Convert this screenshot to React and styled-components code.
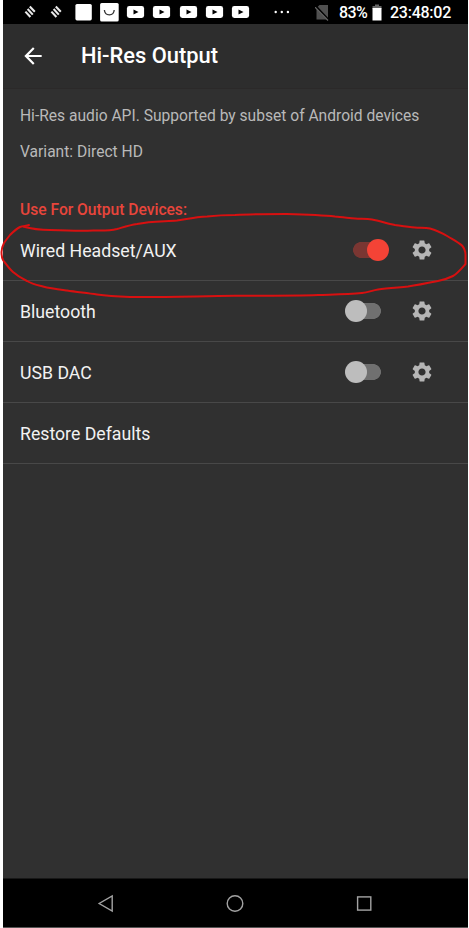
import React, { useState } from 'react';
import styled, { createGlobalStyle } from 'styled-components';
import { MdArrowBack, MdSettings } from 'react-icons/md';


// styling
const GlobalStyle = createGlobalStyle`
    html, body {
      margin: 0;
      background: #fff;
    }
    * {
      box-sizing: border-box;
    }
  `

const ScreenStyle = styled.div`
    position: relative;
    display: flex;
    flex-direction: column;
    width: 469px;
    height: 928px;
    padding: 0 1px 0 3px;
    background: #fff;
    font-family: Roboto, "Liberation Sans", sans-serif;
    overflow: hidden;
  `
const StatusBarStyle = styled.div`
    display: flex;
    align-items: center;
    height: 24px;
    padding: 0 17px 1px 21px;
    background: #000;
    color: #fff;
    flex-shrink: 0;
  `
const NotificationsStyle = styled.div`
    display: flex;
    align-items: center;
    svg {
      display: block;
      width: 26.3px;
      height: 22px;
      overflow: visible;
    }
  `
const StatusInfoStyle = styled.div`
    display: flex;
    align-items: center;
    margin-left: auto;
    svg {
      display: block;
    }
  `
const StatusTextStyle = styled.span`
    width: ${props => props.$width}px;
    font-size: 16px;
    line-height: 22px;
    font-weight: 500;
    letter-spacing: ${props => props.$spacing || 0}px;
    padding-top: 2px;
    white-space: nowrap;
  `
const HeaderStyle = styled.header`
    display: flex;
    align-items: center;
    height: 65px;
    padding: 0 17px;
    background: #2d2d2d;
    border-bottom: 1px solid #2b2929;
    color: #fff;
    flex-shrink: 0;
  `
const BackStyle = styled.button`
    display: flex;
    padding: 0 0 1px;
    border: none;
    background: none;
    color: #fff;
    font-size: 26px;
  `
const TitleStyle = styled.h1`
    margin: 0 0 0 35px;
    font-size: 21.9px;
    line-height: 28px;
    font-weight: 500;
  `
const ContentStyle = styled.main`
    flex: 1;
    background: #303030;
  `
const DescriptionStyle = styled.div`
    padding: 15px 17px 0;
  `
const ParagraphStyle = styled.p`
    margin: 0 0 12px;
    font-size: 15.6px;
    line-height: 24px;
    color: #b9b9b9;
    white-space: nowrap;
  `
const SectionStyle = styled.h2`
    margin: 34px 17px 0;
    font-size: 15.6px;
    line-height: 24px;
    font-weight: 500;
    color: #e8453b;
  `
const DeviceListStyle = styled.div`
    margin-top: -2px;
  `
const RowStyle = styled.div`
    display: flex;
    align-items: center;
    height: 61px;
    padding: 0 34.5px 1px 17px;
    border-bottom: 1px solid #484848;
    color: #f2f2f2;
    font-size: 17.7px;
  `
const RowLabelStyle = styled.span`
    flex: 1;
    padding-top: 2px;
  `
const SwitchStyle = styled.button`
    display: flex;
    align-items: center;
    justify-content: ${props => props.$on ? 'flex-end' : 'flex-start'};
    width: 44px;
    height: 22px;
    margin-right: 20.5px;
    padding: 0;
    border: none;
    background:
      linear-gradient(${props => props.$on ? '#7a3632, #7a3632' : '#707070, #707070'})
      center / 14px 16px no-repeat,
      radial-gradient(circle at 50% 50%, ${props => props.$on ? '#7a3632' : '#707070'} 7.6px, transparent 8.2px)
      8px 50% / 16px 16px no-repeat,
      radial-gradient(circle at 50% 50%, ${props => props.$on ? '#7a3632' : '#707070'} 7.6px, transparent 8.2px)
      20px 50% / 16px 16px no-repeat;
  `
const ThumbStyle = styled.span`
    width: 22px;
    height: 22px;
    border-radius: 50%;
    background: ${props => props.$on ? '#f44336' : '#bdbdbd'};
  `
const GearStyle = styled.button`
    display: flex;
    padding: 0;
    border: none;
    background: none;
    color: #b5b5b5;
    font-size: 24px;
  `
const NavBarStyle = styled.nav`
    display: flex;
    align-items: center;
    justify-content: center;
    gap: 105px;
    height: 50px;
    padding: 0 2px 0 0;
    border-top: 1px solid #181818;
    border-bottom: 1px solid #555;
    background: #000;
    flex-shrink: 0;
    svg {
      display: block;
      fill: none;
      stroke: #a3a3a3;
      stroke-width: 1.4;
    }
  `
const MarkerStyle = styled.svg`
    position: absolute;
    left: 0;
    top: 0;
    pointer-events: none;
    fill: none;
    stroke: #d81010;
    stroke-width: 2;
    stroke-linecap: round;
    stroke-linejoin: round;
  `
  // styling


function StripesIcon() {
    return (
    <svg viewBox="0 0 26.3 22">
      <path d="M5.8 5.6 L10.8 10.8 M3.6 8 L8.8 13.6 M1.4 10.6 L6.4 16" stroke="#e8e8e8" strokeWidth="2.1" fill="none"/>
    </svg>
    )
}

function VideoIcon() {
    return (
    <svg viewBox="0 0 26.3 22">
      <rect x="-2.1" y="5" width="17.2" height="12" rx="2.4" fill="#fff"/>
      <path d="M4.5 8.6 L9.5 11.1 L4.5 13.6 Z" fill="#000"/>
    </svg>
    )
}

function StatusBar() {
    return (
    <StatusBarStyle>
      <NotificationsStyle>
        <StripesIcon/>
        <StripesIcon/>
        <svg viewBox="0 0 26.3 22">
          <rect x="-1.6" y="3" width="16.4" height="16.4" rx="1.6" fill="#fff"/>
        </svg>
        <svg viewBox="0 0 26.3 22">
          <rect x="-2.9" y="2" width="18.6" height="18.6" rx="1.6" fill="#fff"/>
          <path d="M1.4 9 C1.8 15.4 10.8 15.4 11.2 9" fill="none" stroke="#333" strokeWidth="1.3"/>
        </svg>
        <VideoIcon/>
        <VideoIcon/>
        <VideoIcon/>
        <VideoIcon/>
        <VideoIcon/>
        <svg viewBox="0 0 26.3 22" fill="#fff">
          <circle cx="14.7" cy="11" r="1.2"/>
          <circle cx="20.8" cy="11" r="1.2"/>
          <circle cx="26.9" cy="11" r="1.2"/>
        </svg>
      </NotificationsStyle>
      <StatusInfoStyle>
        <svg width="24" height="22" viewBox="0 0 24 22">
          <path d="M4.5 4 H13 V18.5 H1.5 V7 Z" fill="#505050"/>
          <path d="M0 4.5 L14 19.5" stroke="#000" strokeWidth="2.4"/>
          <path d="M-0.5 5.5 L13 19.5" stroke="#666" strokeWidth="1.2"/>
        </svg>
        <StatusTextStyle $width={33} $spacing={-0.6}>83%</StatusTextStyle>
        <svg width="18" height="22" viewBox="0 0 18 22">
          <path d="M3 3.5 H7 V5 H9.5 V8 H0.5 V5 H3 Z" fill="#666"/>
          <rect x="0.5" y="7" width="9" height="12.5" fill="#fff"/>
        </svg>
        <StatusTextStyle $width={61} $spacing={-0.25}>23:48:02</StatusTextStyle>
      </StatusInfoStyle>
    </StatusBarStyle>
    )
}

function DeviceRow({ label, defaultOn }) {
    const [on, setOn] = useState(Boolean(defaultOn));

    return (
    <RowStyle>
      <RowLabelStyle>{label}</RowLabelStyle>
      <SwitchStyle role="switch" aria-checked={on} aria-label={label} $on={on} onClick={() => setOn(!on)}>
        <ThumbStyle $on={on}/>
      </SwitchStyle>
      <GearStyle aria-label={label + ' settings'}><MdSettings/></GearStyle>
    </RowStyle>
    )
}

function App() {
    return (
    <ScreenStyle>
      <GlobalStyle/>
      <StatusBar/>
      <HeaderStyle>
        <BackStyle aria-label="Back"><MdArrowBack/></BackStyle>
        <TitleStyle>Hi-Res Output</TitleStyle>
      </HeaderStyle>
      <ContentStyle>
        <DescriptionStyle>
          <ParagraphStyle>Hi-Res audio API. Supported by subset of Android devices</ParagraphStyle>
          <ParagraphStyle>Variant: Direct HD</ParagraphStyle>
        </DescriptionStyle>
        <SectionStyle>Use For Output Devices:</SectionStyle>
        <DeviceListStyle>
          <DeviceRow label="Wired Headset/AUX" defaultOn/>
          <DeviceRow label="Bluetooth"/>
          <DeviceRow label="USB DAC"/>
          <RowStyle>
            <RowLabelStyle>Restore Defaults</RowLabelStyle>
          </RowStyle>
        </DeviceListStyle>
      </ContentStyle>
      <NavBarStyle>
        <svg width="24" height="24" viewBox="0 0 24 24"><path d="M18.2 5 V20 L5.2 12.5 Z"/></svg>
        <svg width="24" height="24" viewBox="0 0 24 24"><circle cx="12" cy="12.5" r="7.8"/></svg>
        <svg width="24" height="24" viewBox="0 0 24 24"><rect x="5.6" y="5.9" width="13.2" height="13.2"/></svg>
      </NavBarStyle>
      {/* hand drawn loop around the first device */}
      <MarkerStyle width="469" height="928" viewBox="0 0 469 928">
        <path d="M23 226.5 C32 229 40 230 50 230 C64 230.5 80 231 93 230.5 C102 230.5 109 231 117 229 C124 227 130 225 137 224 C150 221 164 221.5 177 220.5 C187 219 196 217 207 216.5 C216 215.5 225 215 235 215 C252 214 268 214 285 214 C302 214.5 320 215 335 216.5 C342 217 349 218 355 218.5 C361 219 366 218.5 372 219.5 C380 221 387 223.5 395 225 C402 226 408 227 415 227.5 C420 228 425 227.5 430 228.5 C436 230 442 233 448 236.5 C453 239.5 458 242 462 245.5 C465 249 465.5 251 465.5 255 V264 C462 268 457 274 453 276 C448 278.5 443 280 438 281 C428 283 418 285 408 286.5 C398 287.5 387 288 378 289.5 C372 290.5 368 292.5 362 293 C347 294.5 332 294.5 318 295 C290 296 262 295.5 235 295.7 C200 296 164 297.5 130 297 C118 296.5 108 296 97 294.5 C87 293 77 292 67 290.5 C59 289.5 50 288.5 43 286.5 C37 285 32 284 27 281 C22 278.5 17 275.5 13 272 C9 268.5 6 264 3 260 C1.5 257 1.5 255 1.5 252 C1.5 249 2.5 246 4 243 C6 240 8 237.5 10 235 C13 232 16 229 20 227 C23 225.8 26 226 29 225"/>
      </MarkerStyle>
    </ScreenStyle>
    )
}


export default App
